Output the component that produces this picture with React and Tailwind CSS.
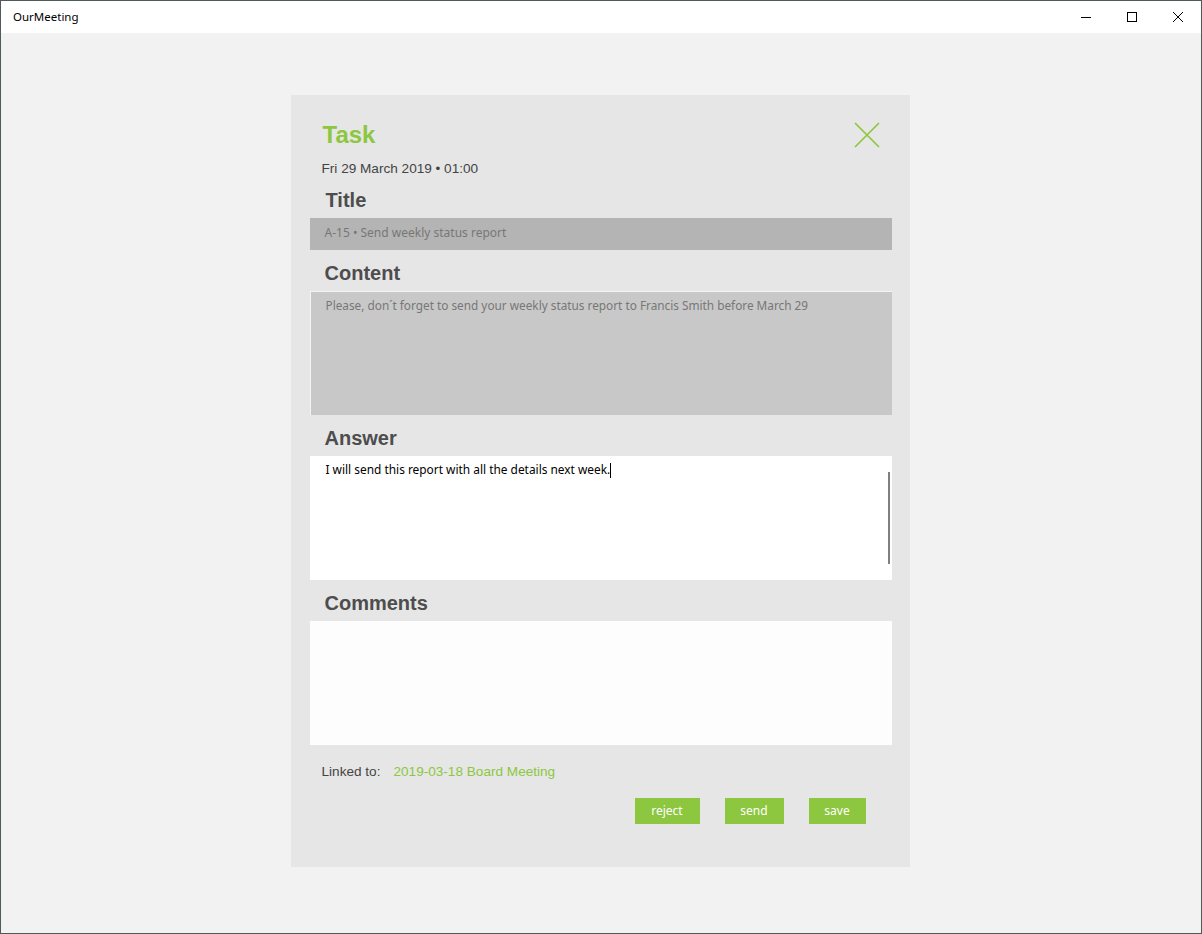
import React from "react";

const sans = { fontFamily: '"Liberation Sans", Arial, sans-serif' };
const ui = { fontFamily: '"Noto Sans", "Open Sans", sans-serif' };

function Label({ children }) {
  return (
    <div className="mt-[5px] pl-[15px] h-[36px] flex items-center text-[20px] font-bold text-[#4d4d4d]" style={sans}>
      {children}
    </div>
  );
}

export default function App() {
  return (
    <div className="w-[1202px] h-[934px] flex flex-col border border-[#4f5a5c] bg-[#f2f2f2] overflow-hidden">
      <div className="h-[32px] bg-white flex items-center shrink-0">
        <div className="pl-[12px] text-[11.5px] text-black flex-1" style={ui}>OurMeeting</div>
        <div className="flex h-full">
          <div className="w-[46px] h-full flex items-center justify-center">
            <div className="w-[10px] h-px bg-black" />
          </div>
          <div className="w-[46px] h-full flex items-center justify-center">
            <div className="w-[10px] h-[10px] border border-black" />
          </div>
          <div className="w-[46px] h-full flex items-center justify-center">
            <svg width="12" height="12" viewBox="0 0 12 12"><path d="M1 1L11 11M11 1L1 11" stroke="#000" strokeWidth="1" /></svg>
          </div>
        </div>
      </div>
      <div className="flex-1 flex justify-center pt-[62px]">
        <div className="w-[619px] h-[772px] bg-[#e6e6e6] ml-[-2px] pl-[19px] pr-[18px] flex flex-col">
          <div className="flex justify-between items-start pt-[24px]">
            <div className="pl-[13px] text-[24px] font-bold text-[#8dc63f] leading-[32px]" style={sans}>Task</div>
            <svg className="mt-[3px] mr-[12px]" width="26" height="26" viewBox="0 0 26 26">
              <path d="M1 1L25 25M25 1L1 25" stroke="#8dc63f" strokeWidth="1.7" />
            </svg>
          </div>
          <div className="pl-[12px] mt-[8px] text-[13.6px] text-[#444] leading-[20px]" style={sans}>Fri 29 March 2019 • 01:00</div>
          <div className="mt-[3px] h-[36px] pl-[16px] flex items-center text-[20px] font-bold text-[#4d4d4d]" style={sans}>Title</div>
          <div className="h-[32px] bg-[#b4b4b4] flex items-center pl-[15px] pb-[3px] text-[12px] text-[#777]" style={ui}>
            A-15 • Send weekly status report
          </div>
          <Label>Content</Label>
          <div className="h-[124px] bg-[#c8c8c8] border-t border-l border-[#f4f4f4] pl-[15px] pt-[5px] text-[11.8px] text-[#777]" style={ui}>
            Please, don´t forget to send your weekly status report to Francis Smith before March 29
          </div>
          <Label>Answer</Label>
          <div className="h-[124px] bg-white pl-[16px] pt-[5px] text-[11.9px] text-black flex" style={ui}>
            <div className="flex-1 flex items-start">
              <span>I will send this report with all the details next week.</span>
              <span className="inline-block w-px h-[15px] bg-black mt-[2px]" />
            </div>
            <div className="w-[2px] h-[92px] bg-[#808080] mt-[11px] mr-[2px]" />
          </div>
          <Label>Comments</Label>
          <div className="h-[124px] bg-[#fdfdfd]" />
          <div className="mt-[16px] pl-[12px] flex items-center text-[13.6px] leading-[22px]" style={sans}>
            <span className="text-[#444]">Linked to:</span>
            <span className="ml-[13px] text-[#8dc63f]">2019-03-18 Board Meeting</span>
          </div>
          <div className="mt-[15px] flex justify-end gap-[25px] pr-[26px] text-[12px] text-white" style={ui}>
            <div className="w-[65px] h-[26px] bg-[#8dc63f] flex items-center justify-center">reject</div>
            <div className="w-[59px] h-[26px] bg-[#8dc63f] flex items-center justify-center">send</div>
            <div className="w-[57px] h-[26px] bg-[#8dc63f] flex items-center justify-center">save</div>
          </div>
        </div>
      </div>
    </div>
  );
}
